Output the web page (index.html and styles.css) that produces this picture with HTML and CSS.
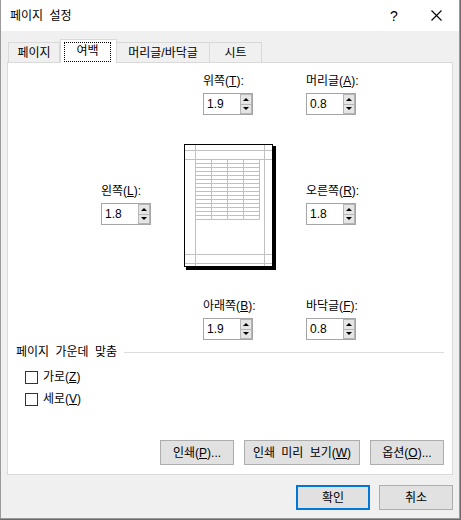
FILE: index.html
```html
<!DOCTYPE html>
<html lang="ko">
<head>
<meta charset="utf-8">
<link rel="stylesheet" href="styles.css">
</head>
<body>
<div class="dialog">
  <div class="titlebar">
    <span class="title">페이지 설정</span>
    <span class="help">?</span>
    <svg class="close" width="11" height="11" viewBox="0 0 11 11"><path d="M0.5 0.5L10.5 10.5M10.5 0.5L0.5 10.5" stroke="#000" stroke-width="1.1" fill="none"/></svg>
  </div>
  <div class="tabs">
    <div class="tab t1">페이지</div>
    <div class="tab active"><span class="focus">여백</span></div>
    <div class="tab t3">머리글/바닥글</div>
    <div class="tab t4">시트</div>
  </div>
  <div class="panel">
    <div class="row row-top">
      <div class="field">
        <div class="label">위쪽(<u>T</u>):</div>
        <div class="box"><span class="val">1.9</span><span class="spin"><span class="up"><i></i></span><span class="down"><i></i></span></span></div>
      </div>
      <div class="field">
        <div class="label">머리글(<u>A</u>):</div>
        <div class="box"><span class="val">0.8</span><span class="spin"><span class="up"><i></i></span><span class="down"><i></i></span></span></div>
      </div>
    </div>
    <div class="row row-mid">
      <div class="field side">
        <div class="label">왼쪽(<u>L</u>):</div>
        <div class="box"><span class="val">1.8</span><span class="spin"><span class="up"><i></i></span><span class="down"><i></i></span></span></div>
      </div>
      <svg class="preview" width="92" height="126" viewBox="0 0 92 126">
        <rect x="2" y="2" width="90" height="124" fill="#000"/>
        <rect x="0.5" y="0.5" width="88" height="122" fill="#fff" stroke="#000"/>
        <path d="M11.5 1V122M80.5 1V122M1 6.5H88M1 15.5H88M1 110.5H88M1 119.5H88" stroke="#c0c0c0" fill="none"/>
        <path d="M27.5 15.5V75.5M43.5 15.5V75.5M59.5 15.5V75.5M75.5 15.5V75.5M11.5 19.5H75.5M11.5 23.5H75.5M11.5 27.5H75.5M11.5 31.5H75.5M11.5 35.5H75.5M11.5 39.5H75.5M11.5 43.5H75.5M11.5 47.5H75.5M11.5 51.5H75.5M11.5 55.5H75.5M11.5 59.5H75.5M11.5 63.5H75.5M11.5 67.5H75.5M11.5 71.5H75.5M11.5 75.5H75.5" stroke="#c0c0c0" fill="none"/>
      </svg>
      <div class="field side right">
        <div class="label">오른쪽(<u>R</u>):</div>
        <div class="box"><span class="val">1.8</span><span class="spin"><span class="up"><i></i></span><span class="down"><i></i></span></span></div>
      </div>
    </div>
    <div class="row row-top row-bot">
      <div class="field">
        <div class="label">아래쪽(<u>B</u>):</div>
        <div class="box"><span class="val">1.9</span><span class="spin"><span class="up"><i></i></span><span class="down"><i></i></span></span></div>
      </div>
      <div class="field">
        <div class="label">바닥글(<u>F</u>):</div>
        <div class="box"><span class="val">0.8</span><span class="spin"><span class="up"><i></i></span><span class="down"><i></i></span></span></div>
      </div>
    </div>
    <div class="group">
      <span class="group-title">페이지 가운데 맞춤</span>
      <span class="group-line"></span>
    </div>
    <div class="check first"><span class="cb"></span><span class="cl">가로(<u>Z</u>)</span></div>
    <div class="check"><span class="cb"></span><span class="cl">세로(<u>V</u>)</span></div>
    <div class="actions">
      <div class="btn w74">인쇄(<u>P</u>)...</div>
      <div class="btn w116">인쇄 미리 보기(<u>W</u>)</div>
      <div class="btn w74">옵션(<u>O</u>)...</div>
    </div>
  </div>
  <div class="footer">
    <div class="btn ok">확인</div>
    <div class="btn">취소</div>
  </div>
</div>
</body>
</html>
```
FILE: styles.css
```css
* { box-sizing: border-box; }
html, body { margin: 0; padding: 0; }
body {
  width: 461px;
  height: 520px;
  overflow: hidden;
  background: #6a6a6a;
  font-family: "Liberation Sans", "Noto Sans CJK KR", sans-serif;
  font-size: 12px;
  line-height: 16px;
  word-spacing: 3px;
  color: #000;
}
u { text-decoration: underline; text-underline-offset: 1px; }

.dialog {
  width: 460px;
  height: 519px;
  background: #f0f0f0;
  border: 1px solid #9a9a9a;
  border-top: none;
  display: flex;
  flex-direction: column;
}

.titlebar {
  height: 31px;
  flex: none;
  background: #fff;
  display: flex;
  align-items: center;
  padding-left: 9px;
}
.title { flex: 1; }
.help {
  width: 41px;
  font-size: 14px;
}
.close { margin-right: 17px; }

.tabs {
  display: flex;
  align-items: flex-end;
  height: 23px;
  margin-top: 8px;
  padding-left: 7px;
  flex: none;
}
.tab {
  height: 20px;
  border: 1px solid #d9d9d9;
  border-bottom: none;
  background: #f0f0f0;
  display: flex;
  align-items: center;
  justify-content: center;
  white-space: nowrap;
}
.t1 { width: 52px; }
.t3 { width: 94px; margin-left: -1px; }
.t4 { width: 53px; margin-left: -1px; }
.tab.active {
  width: 57px;
  height: 24px;
  background: #fff;
  margin-bottom: -1px;
  position: relative;
  z-index: 1;
  padding: 2px 5px 1px 3px;
  align-items: flex-start;
}
.focus {
  display: block;
  width: 47px;
  height: 20px;
  border: 1px dotted #000;
  text-align: center;
  line-height: 17px;
}

.panel {
  margin-left: 6px;
  width: 446px;
  height: 413px;
  flex: none;
  background: #fff;
  border: 1px solid #d9d9d9;
  display: flex;
  flex-direction: column;
}

.row { display: flex; }
.row-top { margin-top: 10px; padding-left: 195px; gap: 53px; }
.row-mid { margin-top: 29px; padding-left: 93px; align-items: flex-start; }
.row-bot { margin-top: 28px; }

.field {
  width: 50px;
  display: flex;
  flex-direction: column;
  gap: 4px;
  white-space: nowrap;
}
.side { margin-top: 39px; }
.preview { display: block; margin-left: 33px; flex: none; }
.right { margin-left: 30px; }

.box {
  height: 22px;
  border: 1px solid #a5a5a5;
  background: #fff;
  display: flex;
  align-items: center;
  padding-left: 3px;
}
.val { flex: 1; }
.spin {
  width: 12px;
  height: 20px;
  display: flex;
  flex-direction: column;
}
.spin > span {
  flex: 1;
  background: #e5e5e5;
  border: 1px solid #b5b5b5;
  display: flex;
  align-items: center;
  justify-content: center;
}
.spin > .down { border-top: none; }
.up i {
  display: block;
  width: 0; height: 0;
  border-left: 3px solid transparent;
  border-right: 3px solid transparent;
  border-bottom: 3px solid #000;
}
.down i {
  display: block;
  width: 0; height: 0;
  border-left: 3px solid transparent;
  border-right: 3px solid transparent;
  border-top: 3px solid #000;
}

.group {
  margin-top: 4px;
  padding-left: 8px;
  display: flex;
  align-items: center;
}
.group-line {
  flex: 1;
  height: 1px;
  background: #dcdcdc;
  margin-left: 7px;
  margin-right: 8px;
}

.check {
  display: flex;
  align-items: center;
  height: 16px;
  margin-top: 6px;
  padding-left: 17px;
}
.check.first { margin-top: 9px; }
.cb {
  width: 13px;
  height: 13px;
  border: 1px solid #333;
  background: #fff;
}
.cl { margin-left: 5px; }

.actions {
  margin-top: auto;
  margin-bottom: 9px;
  display: flex;
  justify-content: flex-end;
  gap: 10px;
  padding-right: 8px;
}
.btn {
  height: 25px;
  width: 74px;
  border: 1px solid #adadad;
  background: #e1e1e1;
  display: flex;
  align-items: center;
  justify-content: center;
  white-space: nowrap;
}
.w116 { width: 116px; }

.footer {
  margin-top: 10px;
  display: flex;
  justify-content: flex-end;
  gap: 9px;
  padding-right: 6px;
}
.btn.ok { border: 2px solid #0078d7; }
```
